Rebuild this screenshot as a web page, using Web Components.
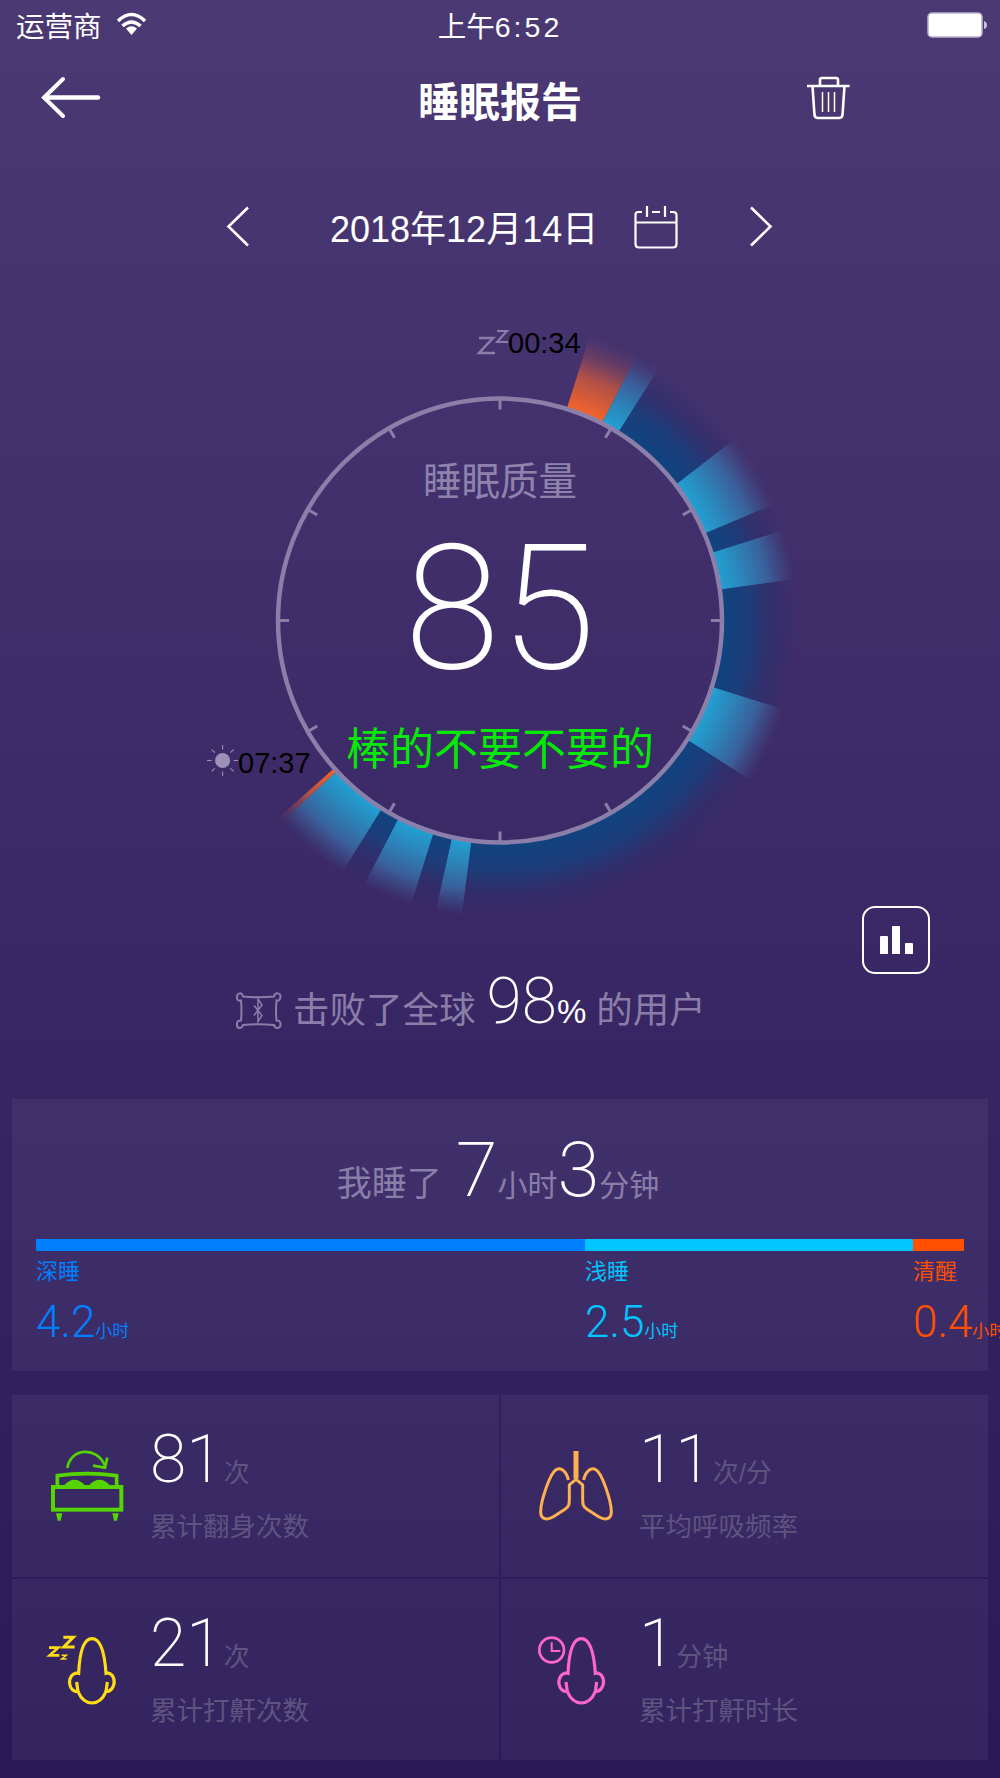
<!DOCTYPE html>
<html lang="zh">
<head>
<meta charset="utf-8">
<title>睡眠报告</title>
<style>
  html, body { margin: 0; padding: 0; overflow: hidden; }
  body {
    width: 1000px; height: 1778px;
    background: linear-gradient(180deg, #4b3974 0%, #291958 100%);
    color: #fff;
    font-family: "Liberation Sans", "Noto Sans CJK SC", sans-serif;
  }
</style>
</head>
<body>
<sleep-report>
  <status-bar carrier="运营商" time="上午" clock="6:52"></status-bar>
  <nav-header title="睡眠报告"></nav-header>
  <date-picker date="2018年12月14日"></date-picker>
  <sleep-dial score="85" quality="棒的不要不要的" start="00:34" end="07:37"></sleep-dial>
  <beat-line percent="98"></beat-line>
  <duration-card></duration-card>
  <stat-grid>
    <stat-cell value="81" unit="次" label="累计翻身次数">
      <svg slot="icon" viewBox="36 15 420 546" width="140" height="182" fill="none" stroke="#55d400" stroke-width="8">
        <path d="M202 234C212 172 292 170 314 226" stroke-width="8"/>
        <path d="M322 203L315 233L279 227" stroke-width="8"/>
        <path d="M172 290V257Q261 245 350 257V290" stroke-width="11"/>
        <rect x="159" y="291" width="205" height="68" stroke-width="12"/>
        <path d="M191 287Q223 252 256 287ZM266 287Q298 252 331 287Z" fill="#55d400" stroke="none"/>
        <path d="M168 370H187L182 392H173ZM337 370H356L351 392H342Z" fill="#55d400" stroke="none"/>
      </svg>
    </stat-cell>
    <stat-cell value="11" unit="次/分" label="平均呼吸频率">
      <svg slot="icon" viewBox="3 15 420 546" width="140" height="182" fill="none" stroke="#ffb14e" stroke-width="9">
        <path d="M228 183V266" stroke-width="15"/>
        <path d="M206 286L228 268L250 286" stroke-width="9"/>
        <path d="M205 270C200 245 185 232 170 238C150 246 122 335 122 365C122 388 140 392 160 380L195 358C207 350 208 345 208 325V285"/>
        <path d="M251 270C256 245 271 232 286 238C306 246 334 335 334 365C334 388 316 392 296 380L261 358C249 350 248 345 248 325V285"/>
      </svg>
    </stat-cell>
    <stat-cell value="21" unit="次" label="累计打鼾次数">
      <svg slot="icon" viewBox="36 567 420 546" width="140" height="182" fill="none" stroke="#ffdc14" stroke-width="9.500">
        <path d="M190 742H220L191 771H224" stroke-width="9"/>
        <path d="M147 773H175L149 796H178" stroke-width="8"/>
        <path d="M185 796H199L185 807H200" stroke-width="4.500"/>
        <path d="M236 850C238 805 245 746 276 746C307 746 315 805 318 850C335 845 345 865 342 882C338 898 328 905 318 905C308 928 292 939 276 939C260 939 244 928 234 905C222 905 212 898 209 882C206 865 218 845 236 850Z"/>
        <path d="M230 876L234 905M322 876L318 905"/>
      </svg>
    </stat-cell>
    <stat-cell value="1" unit="分钟" label="累计打鼾时长">
      <svg slot="icon" viewBox="3 567 420 546" width="140" height="182" fill="none" stroke="#ff66cc" stroke-width="9.500">
        <circle cx="155" cy="780" r="37" stroke-width="8"/>
        <path d="M155 757V783H181" stroke-width="6"/>
        <path d="M204 850C206 805 213 746 244 746C275 746 283 805 286 850C303 845 313 865 310 882C306 898 296 905 286 905C276 928 260 939 244 939C228 939 212 928 202 905C190 905 180 898 177 882C174 865 186 845 204 850Z"/>
        <path d="M198 876L202 905M290 876L286 905"/>
      </svg>
    </stat-cell>
  </stat-grid>
</sleep-report>

<script>
const THIN_NUM = 'Roboto, "Liberation Sans", sans-serif';

class SleepReport extends HTMLElement {
  constructor() {
    super();
    this.attachShadow({ mode: 'open' });
    this.shadowRoot.innerHTML = `
      <style>
        :host { display: flex; flex-direction: column; width: 1000px; height: 1778px; overflow: hidden; }
      </style>
      <slot></slot>
    `;
  }
}

class StatusBar extends HTMLElement {
  constructor() {
    super();
    this.attachShadow({ mode: 'open' });
  }

  connectedCallback() {
    this.shadowRoot.innerHTML = `
      <style>
        :host { display: block; height: 52px; }
        .bar { position: relative; display: flex; align-items: center; height: 48px; padding: 0 13px 0 16px; font-size: 28.500px; }
        .time { position: absolute; left: 0; right: 0; top: 4px; text-align: center; }
        .time span { letter-spacing: 3px; }
        svg { display: block; }
        .wifi { margin-left: 14px; }
        .battery { margin-left: auto; margin-top: 2px; }
      </style>
      <div class="bar">
        <span>${this.getAttribute('carrier')}</span>
        <svg class="wifi" width="32" height="24" viewBox="116 12 32 24" fill="none" stroke="#fff" stroke-width="3.400">
          <path d="M118 21Q131.500 8 145 21"/>
          <path d="M122.500 26Q131.500 18 140.500 26"/>
          <path d="M126 28.500Q131.500 24 137 28.500L131.500 35Z" fill="#fff" stroke="none"/>
        </svg>
        <div class="time">${this.getAttribute('time')}<span>${this.getAttribute('clock')}</span></div>
        <svg class="battery" width="60" height="26" viewBox="927 12 60 26">
          <rect x="928" y="13" width="54" height="24" rx="4" fill="#fff" stroke="#b9b0d0" stroke-width="1.500"/>
          <path d="M984 21Q987 22 987 25Q987 28 984 29Z" fill="#c9c2dc"/>
        </svg>
      </div>
    `;
  }
}

class NavHeader extends HTMLElement {
  constructor() {
    super();
    this.attachShadow({ mode: 'open' });
  }

  connectedCallback() {
    this.shadowRoot.innerHTML = `
      <style>
        :host { display: block; height: 104px; }
        .nav { position: relative; display: flex; justify-content: space-between; align-items: flex-start; height: 100%; padding: 24px 150px 0 41px; box-sizing: border-box; }
        h1 { position: absolute; left: 0; right: 0; top: -1px; margin: 0; text-align: center; font-size: 41px; font-weight: 700; line-height: 104px; }
        svg { display: block; }
      </style>
      <div class="nav">
        <svg width="60" height="44" viewBox="40 76 60 44" fill="none" stroke="#fff" stroke-linecap="round">
          <path d="M62 79L43 97.500L62 116" stroke-width="4"/>
          <path d="M44 97.500H97" stroke-width="4.500"/>
        </svg>
        <h1>${this.getAttribute('title')}</h1>
        <svg width="44" height="44" viewBox="806 76 44 44" fill="none" stroke="#fff" stroke-width="2.600">
          <path d="M807 86H849.500"/>
          <path d="M820 85V80Q820 78 822 78H836Q838 78 838 80V85"/>
          <path d="M812.500 86L814.500 115Q815 118 818 118H839Q842 118 842.500 115L844.500 86"/>
          <path d="M822.500 92V112M828.500 92V112M834.500 92V112" stroke-width="1.500"/>
        </svg>
      </div>
    `;
  }
}

class DatePicker extends HTMLElement {
  constructor() {
    super();
    this.attachShadow({ mode: 'open' });
  }

  connectedCallback() {
    this.shadowRoot.innerHTML = `
      <style>
        :host { display: block; height: 100px; margin-top: 21px; }
        .row { display: flex; align-items: center; height: 100%; padding-left: 226px; font-size: 36px; }
        svg { display: block; flex: none; }
        .date { margin-left: 81px; margin-top: -2px; white-space: nowrap; }
        .cal { margin-left: 36px; }
        .next { margin-left: 72px; }
      </style>
      <div class="row">
        <svg width="23" height="42" viewBox="226 207 23 42" fill="none" stroke="#fff" stroke-width="2.600"><path d="M248 208.500L228.500 227.500L248 246.500"/></svg>
        <span class="date">${this.getAttribute('date')}</span>
        <svg class="cal" width="44" height="44" viewBox="634 205 44 44" fill="none" stroke="#fff" stroke-width="2.200">
          <path d="M642 212H638Q635.500 212 635.500 215V244Q635.500 247.500 639 247.500H673Q676.500 247.500 676.500 244V215Q676.500 212 673 212H670"/>
          <path d="M652 212H660M635.500 222.500H676.500"/>
          <path d="M647 206V217M665 206V217"/>
        </svg>
        <svg class="next" width="23" height="42" viewBox="751 207 23 42" fill="none" stroke="#fff" stroke-width="2.600"><path d="M752 208.500L771.500 227.500L752 246.500"/></svg>
      </div>
    `;
  }
}

// page coordinates of the dial centre, the svg viewBox keeps them as they are
const CX = 500, CY = 620.5;

// [from, to, kind] in degrees clockwise from 12 o'clock
const SEGMENTS = [
  [17.5, 27.3, 'o'], [27.3, 32.2, 'l'], [32.2, 52.3, 'd'], [52.3, 67, 'l'], [67, 72.3, 'd'],
  [72.3, 82, 'l'], [82, 107.4, 'd'], [107.4, 122.5, 'l'], [122.5, 187.4, 'd'], [187.4, 192.5, 'l'],
  [192.5, 197.4, 'd'], [197.4, 207.2, 'l'], [207.2, 212.1, 'd'], [212.1, 227.3, 'l'], [227.3, 228.3, 'o']
];

function polar(r, deg) {
  const a = (deg - 90) * Math.PI / 180;
  return (CX + r * Math.cos(a)).toFixed(2) + ' ' + (CY + r * Math.sin(a)).toFixed(2);
}

class SleepDial extends HTMLElement {
  constructor() {
    super();
    this.attachShadow({ mode: 'open' });
  }

  wedges() {
    const inner = 220, outer = 300;
    return SEGMENTS.map(([a, b, k]) => {
      const large = b - a > 180 ? 1 : 0;
      return `<path fill="url(#g${k})" d="M${polar(inner, a)}A${inner} ${inner} 0 ${large} 1 ${polar(inner, b)}L${polar(outer, b)}A${outer} ${outer} 0 ${large} 0 ${polar(outer, a)}Z"/>`;
    }).join('');
  }

  ticks() {
    let out = '';
    for (let d = 0; d < 360; d += 30) {
      out += `<path d="M${polar(222, d)}L${polar(211, d)}"/>`;
    }
    return out;
  }

  sunRays() {
    let out = '';
    for (let d = 0; d < 360; d += 45) {
      const a = d * Math.PI / 180;
      out += `<path d="M${222.6 + 11 * Math.cos(a)} ${760.5 + 11 * Math.sin(a)}L${222.6 + 15.5 * Math.cos(a)} ${760.5 + 15.5 * Math.sin(a)}"/>`;
    }
    return out;
  }

  connectedCallback() {
    this.shadowRoot.innerHTML = `
      <style>
        :host { display: block; position: relative; height: 690px; }
        svg.art { display: block; position: absolute; left: 0; top: 0; }
        .face { position: absolute; left: 278px; top: 121px; width: 444px; height: 444px; display: flex; flex-direction: column; align-items: center; }
        .title { margin-top: 62px; font-size: 38.500px; line-height: 44px; color: #8f83ad; }
        .score { margin-top: 18px; font: 200 174px/174px ${THIN_NUM}; }
        .quality { margin-top: 28px; font-size: 44px; line-height: 52px; color: #05ea05; }
        .time { position: absolute; font-size: 29px; line-height: 32px; color: #000; }
        .chart { position: absolute; left: 862px; top: 629px; width: 68px; height: 68px; box-sizing: border-box; border: 2.500px solid #fff; border-radius: 13px; display: flex; align-items: flex-end; justify-content: center; gap: 4.500px; padding-bottom: 18px; }
        .chart i { display: block; width: 8px; background: #fff; border-radius: 1px 1px 0 0; }
      </style>
      <svg class="art" width="1000" height="698" viewBox="0 277 1000 698" fill="none">
        <defs>
          <radialGradient id="gd" gradientUnits="userSpaceOnUse" cx="${CX}" cy="${CY}" r="298">
            <stop offset=".74" stop-color="#0e4480"/><stop offset=".84" stop-color="#1d3d7a"/><stop offset=".92" stop-color="#2c2f6c" stop-opacity=".6"/><stop offset="1" stop-color="#2e2c6c" stop-opacity="0"/>
          </radialGradient>
          <radialGradient id="gl" gradientUnits="userSpaceOnUse" cx="${CX}" cy="${CY}" r="298">
            <stop offset=".74" stop-color="#20a3d5"/><stop offset=".82" stop-color="#2b86bb"/><stop offset=".91" stop-color="#3a5f9a"/><stop offset="1" stop-color="#40508c" stop-opacity="0"/>
          </radialGradient>
          <radialGradient id="go" gradientUnits="userSpaceOnUse" cx="${CX}" cy="${CY}" r="300">
            <stop offset=".74" stop-color="#f5642a"/><stop offset=".86" stop-color="#b05048"/><stop offset="1" stop-color="#6e4068" stop-opacity="0"/>
          </radialGradient>
        </defs>
        ${this.wedges()}
        <circle cx="${CX}" cy="${CY}" r="222" stroke="#8b7fa9" stroke-width="4.500"/>
        <g stroke="#8b7fa9" stroke-width="3">${this.ticks()}</g>
        <path d="M479 338H493L479 353H495" stroke="#8a7ea8" stroke-width="2.500"/>
        <path d="M497 331H507L497 342H508" stroke="#8a7ea8" stroke-width="2"/>
        <circle cx="222.600" cy="760.500" r="7.500" fill="#9c90b8"/>
        <g stroke="#9c90b8" stroke-width="1.100">${this.sunRays()}</g>
      </svg>
      <div class="time" style="left:508px;top:50px">${this.getAttribute('start')}</div>
      <div class="time" style="left:238px;top:470px">${this.getAttribute('end')}</div>
      <div class="face">
        <div class="title">睡眠质量</div>
        <div class="score">${this.getAttribute('score')}</div>
        <div class="quality">${this.getAttribute('quality')}</div>
      </div>
      <div class="chart"><i style="height:18px"></i><i style="height:28px"></i><i style="height:11px"></i></div>
    `;
  }
}

class BeatLine extends HTMLElement {
  constructor() {
    super();
    this.attachShadow({ mode: 'open' });
  }

  connectedCallback() {
    this.shadowRoot.innerHTML = `
      <style>
        :host { display: block; height: 132px; }
        .line { display: flex; align-items: baseline; padding: 2px 0 0 236px; font-size: 36.500px; color: #8a7ea8; line-height: 66px; white-space: nowrap; }
        svg { align-self: center; margin: 8px 11px 0 0; display: block; flex: none; }
        b { font: 200 64px/66px ${THIN_NUM}; color: #fff; margin-left: 11px; }
        em { font: 400 33px/66px "Liberation Sans", sans-serif; color: #fff; margin-right: 10px; }
      </style>
      <div class="line">
        <svg width="46" height="38" viewBox="236 991 46 38" fill="none" stroke="#8a7ea8" stroke-width="2">
          <path d="M243 995.500Q259 997 274 995.500C275 991 281 991.500 280.500 996C280.500 999 278 1000 276.500 999.500Q275.500 1009 276.500 1019.500C279 1019 281 1021 280.500 1024C280 1028 275 1028 274 1024Q259 1022.500 243 1024C242 1028 237 1028 237 1024C236.500 1021 238.500 1019 241 1019.500Q242 1009 241 999.500C238.500 1000 236.500 999 237 996C237 991.500 242 991 243 995.500Z"/>
          <path d="M254 1004.500L262 1014.500L258 1020.500V998L262 1004L254 1014.500" stroke-width="1.500"/>
        </svg>
        <span>击败了全球</span><b>${this.getAttribute('percent')}</b><em>%</em><span>的用户</span>
      </div>
    `;
  }
}

class DurationCard extends HTMLElement {
  constructor() {
    super();
    this.attachShadow({ mode: 'open' });
  }

  connectedCallback() {
    const parts = [
      { name: '深睡', hours: '4.2', width: 549, color: '#0080ff' },
      { name: '浅睡', hours: '2.5', width: 328, color: '#00c5ff' },
      { name: '清醒', hours: '0.4', width: 51, color: '#ff5000' }
    ];
    this.shadowRoot.innerHTML = `
      <style>
        :host { display: block; height: 272px; margin: 0 12px; background: rgba(255,255,255,.052); overflow: visible; }
        .head { display: flex; justify-content: center; align-items: baseline; height: 140px; box-sizing: border-box; padding: 33px 4px 0 0; color: #8a7ea8; white-space: nowrap; }
        .head .t { font-size: 35px; }
        .head .u { font-size: 30px; }
        .head b { font: 200 76px/76px ${THIN_NUM}; color: #fff; }
        .bar { display: flex; margin: 0 24px; height: 12px; }
        .parts { display: flex; margin: 0 24px; }
        .part { flex: none; white-space: nowrap; }
        .name { font-size: 22px; line-height: 24px; margin-top: 9px; }
        .val { display: flex; align-items: baseline; margin-top: 13px; }
        .val b { font: 300 44px/50px ${THIN_NUM}; }
        .val span { font-size: 17px; }
      </style>
      <div class="head"><span class="t">我睡了</span><b style="margin:0 0 0 14px">7</b><span class="u">小时</span><b>3</b><span class="u">分钟</span></div>
      <div class="bar">${parts.map(p => `<div style="width:${p.width}px;background:${p.color}"></div>`).join('')}</div>
      <div class="parts">${parts.map(p => `
        <div class="part" style="width:${p.width}px;color:${p.color}">
          <div class="name">${p.name}</div>
          <div class="val"><b>${p.hours}</b><span>小时</span></div>
        </div>`).join('')}</div>
    `;
  }
}

class StatGrid extends HTMLElement {
  constructor() {
    super();
    this.attachShadow({ mode: 'open' });
    this.shadowRoot.innerHTML = `
      <style>
        :host { display: grid; grid-template-columns: 486.500px 487px; grid-template-rows: 182px 181px; column-gap: 2.500px; row-gap: 2px; margin: 24px 12px 0; }
      </style>
      <slot></slot>
    `;
  }
}

class StatCell extends HTMLElement {
  constructor() {
    super();
    this.attachShadow({ mode: 'open' });
  }

  connectedCallback() {
    this.shadowRoot.innerHTML = `
      <style>
        :host { display: flex; background: rgba(255,255,255,.05); overflow: hidden; }
        ::slotted(svg) { flex: none; display: block; }
        .icon { flex: none; width: 138px; }
        .text { padding-top: 32px; }
        .num { display: flex; align-items: baseline; height: 66px; }
        .num b { font: 200 66px/66px ${THIN_NUM}; color: #fff; }
        .num span { font-size: 26px; color: #5f5380; margin-left: 1px; }
        .label { font-size: 26.500px; line-height: 32px; margin-top: 18px; color: #5f5380; }
      </style>
      <div class="icon"><slot name="icon"></slot></div>
      <div class="text">
        <div class="num"><b>${this.getAttribute('value')}</b><span>${this.getAttribute('unit')}</span></div>
        <div class="label">${this.getAttribute('label')}</div>
      </div>
    `;
  }
}

customElements.define('sleep-report', SleepReport);
customElements.define('status-bar', StatusBar);
customElements.define('nav-header', NavHeader);
customElements.define('date-picker', DatePicker);
customElements.define('sleep-dial', SleepDial);
customElements.define('beat-line', BeatLine);
customElements.define('duration-card', DurationCard);
customElements.define('stat-grid', StatGrid);
customElements.define('stat-cell', StatCell);
</script>
</body>
</html>
